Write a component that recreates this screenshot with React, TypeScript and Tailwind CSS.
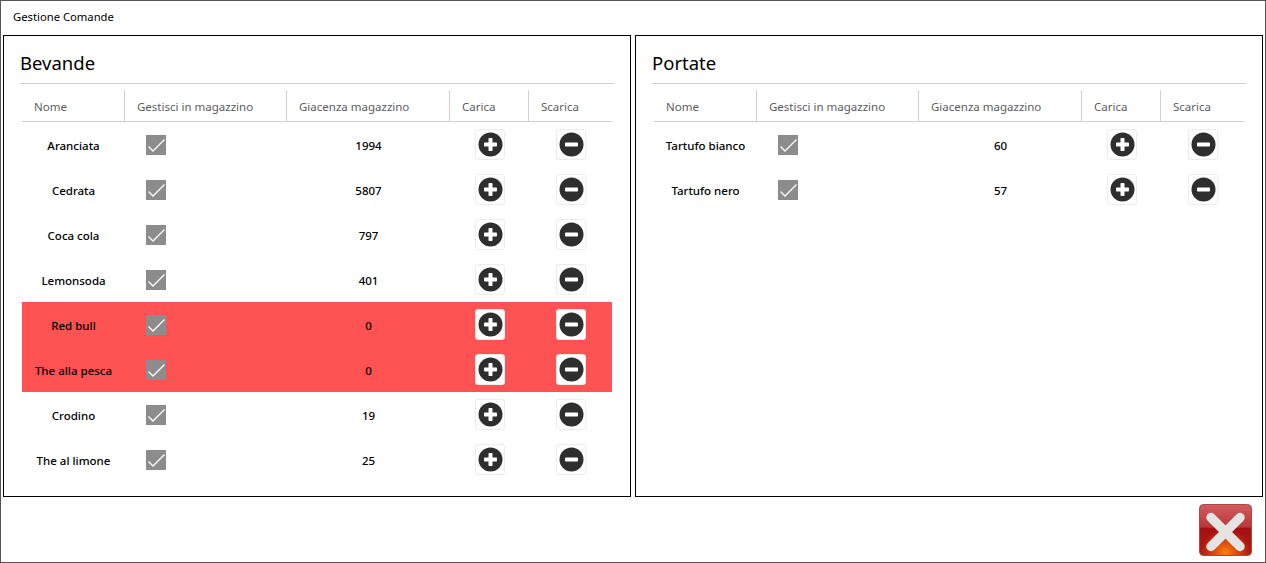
const font = { fontFamily: '"Noto Sans", "Open Sans", sans-serif' };

type Row = { nome: string; giacenza: number };

const bevande: Row[] = [
  { nome: "Aranciata", giacenza: 1994 },
  { nome: "Cedrata", giacenza: 5807 },
  { nome: "Coca cola", giacenza: 797 },
  { nome: "Lemonsoda", giacenza: 401 },
  { nome: "Red bull", giacenza: 0 },
  { nome: "The alla pesca", giacenza: 0 },
  { nome: "Crodino", giacenza: 19 },
  { nome: "The al limone", giacenza: 25 },
];

const portate: Row[] = [
  { nome: "Tartufo bianco", giacenza: 60 },
  { nome: "Tartufo nero", giacenza: 57 },
];

const cols = "grid grid-cols-[103px_162px_163px_79px_83px]";

function Check() {
  return (
    <div className="h-5 w-5 bg-[#8c8c8c]">
      <svg width="20" height="20" viewBox="0 0 20 20" fill="none">
        <path d="M2.5 11.5 L7 16 L18.5 4.5" stroke="#fff" strokeWidth="1.3" />
      </svg>
    </div>
  );
}

function RoundButton({ kind }: { kind: "plus" | "minus" }) {
  return (
    <button className="flex h-[31px] w-[30px] items-center justify-center rounded-[3px] border border-[#ececec] bg-white">
      <svg width="25" height="25" viewBox="0 0 25 25">
        <circle cx="12.5" cy="12.5" r="12" fill="#2e2e2e" />
        <rect x="6" y="10.5" width="13" height="4" rx="0.8" fill="#fff" />
        {kind === "plus" && <rect x="10.5" y="6" width="4" height="13" rx="0.8" fill="#fff" />}
      </svg>
    </button>
  );
}

function HeaderCell({ label, last }: { label: string; last?: boolean }) {
  return (
    <div className={`flex h-[31px] items-center pl-3 pt-[2px] text-[11.5px] text-[#5c5c5c] ${last ? "" : "border-r border-[#cfcfcf]"}`}>
      {label}
    </div>
  );
}

function Panel({ title, rows }: { title: string; rows: Row[] }) {
  return (
    <section className="flex-1 border border-black px-4 pt-[13px]">
      <h2 className="h-[35px] border-b border-[#cfcfcf] text-[18.5px] leading-[28px] text-black">{title}</h2>
      <div className="ml-[2px] mt-[6px] w-[590px]">
        <div className={`${cols} border-b border-[#cfcfcf]`}>
          <HeaderCell label="Nome" />
          <HeaderCell label="Gestisci in magazzino" />
          <HeaderCell label="Giacenza magazzino" />
          <HeaderCell label="Carica" />
          <HeaderCell label="Scarica" last />
        </div>
        {rows.map((r) => (
          <div
            key={r.nome}
            className={`${cols} h-[45px] items-center text-[11.5px] font-medium text-black ${r.giacenza === 0 ? "bg-[#ff5252]" : ""}`}
          >
            <div className="pt-[2px] text-center">{r.nome}</div>
            <div className="pl-[21px]">
              <Check />
            </div>
            <div className="pt-[2px] text-center">{r.giacenza}</div>
            <div className="flex justify-center pl-px">
              <RoundButton kind="plus" />
            </div>
            <div className="flex justify-center pl-px">
              <RoundButton kind="minus" />
            </div>
          </div>
        ))}
      </div>
    </section>
  );
}

function CloseIcon() {
  return (
    <svg width="53" height="53" viewBox="0 0 53 53">
      <defs>
        <linearGradient id="closeBg" x1="0" y1="0" x2="0" y2="1">
          <stop offset="0" stopColor="#d25c5e" />
          <stop offset="0.44" stopColor="#b8383a" />
          <stop offset="0.47" stopColor="#a50f12" />
          <stop offset="1" stopColor="#b0200c" />
        </linearGradient>
        <radialGradient id="closeGlow" cx="0.5" cy="0.95" r="0.48">
          <stop offset="0" stopColor="#ff8010" />
          <stop offset="1" stopColor="#ff6010" stopOpacity="0" />
        </radialGradient>
      </defs>
      <rect x="0.5" y="0.5" width="52" height="51" rx="4" fill="url(#closeBg)" stroke="#a94a4a" />
      <rect x="1" y="1" width="51" height="50" rx="4" fill="url(#closeGlow)" />
      <path d="M12 13.5 L41 42.5 M41 13.5 L12 42.5" stroke="#e6e3e3" strokeWidth="9.5" strokeLinecap="round" fill="none" />
    </svg>
  );
}

export default function App() {
  return (
    <div style={font} className="flex h-[563px] w-[1266px] flex-col border border-[#555] bg-white">
      <div className="flex h-[34px] items-center pb-[1px] pl-3 text-[11.25px] text-black">Gestione Comande</div>
      <div className="flex h-[462px] gap-[4px] px-[2px]">
        <Panel title="Bevande" rows={bevande} />
        <Panel title="Portate" rows={portate} />
      </div>
      <div className="flex justify-end pr-[13px] pt-[7px]">
        <CloseIcon />
      </div>
    </div>
  );
}
